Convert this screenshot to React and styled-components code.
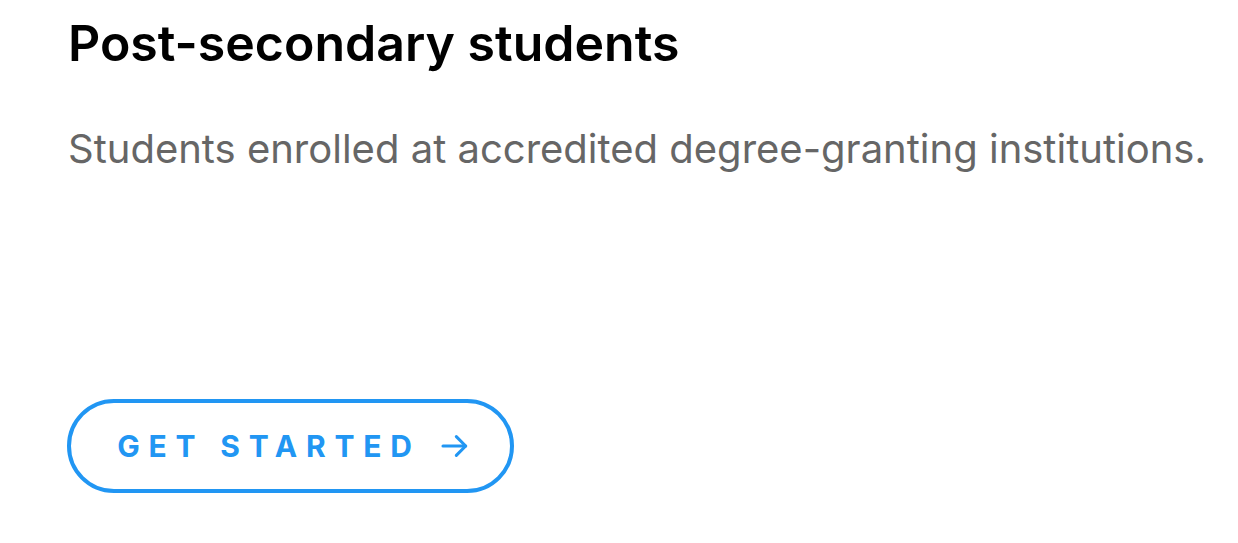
import React from "react";
import styled, { createGlobalStyle } from "styled-components";

const GlobalStyle = createGlobalStyle`
  body {
    margin: 0;
    background: #ffffff;
    font-family: Inter, "Noto Sans", sans-serif;
  }
`;

const Card = styled.section`
  width: 1238px;
  height: 543px;
  box-sizing: border-box;
  padding: 12px 0 0 68px;
  display: flex;
  flex-direction: column;
`;

const Title = styled.h2`
  margin: 0;
  font-size: 50px;
  font-weight: 600;
  line-height: 62px;
  color: #000000;
`;

const Description = styled.p`
  margin: 47px 0 0;
  font-size: 40px;
  font-weight: 400;
  line-height: 56px;
  color: #666666;
`;

const Button = styled.button`
  margin-top: 222px;
  margin-left: -1px;
  align-self: flex-start;
  width: 447px;
  height: 94px;
  box-sizing: border-box;
  border: 4px solid #2196f3;
  border-radius: 47px;
  background: transparent;
  color: #2196f3;
  font-family: Inter, sans-serif;
  font-size: 30px;
  font-weight: 700;
  letter-spacing: 8.8px;
  display: flex;
  align-items: center;
  justify-content: center;
  gap: 18px;
  padding: 0 0 0 7px;
  cursor: pointer;
`;

const Arrow = () => (
  <svg width="32" height="32" viewBox="0 0 24 24" fill="none" stroke="currentColor" strokeWidth="2.3" strokeLinecap="round" strokeLinejoin="round">
    <path d="M3 12h17" />
    <path d="M13 5l7 7-7 7" />
  </svg>
);

export default function App() {
  return (
    <>
      <GlobalStyle />
      <Card>
        <Title>Post-secondary students</Title>
        <Description>Students enrolled at accredited degree-granting institutions.</Description>
        <Button>
          GET STARTED
          <Arrow />
        </Button>
      </Card>
    </>
  );
}
